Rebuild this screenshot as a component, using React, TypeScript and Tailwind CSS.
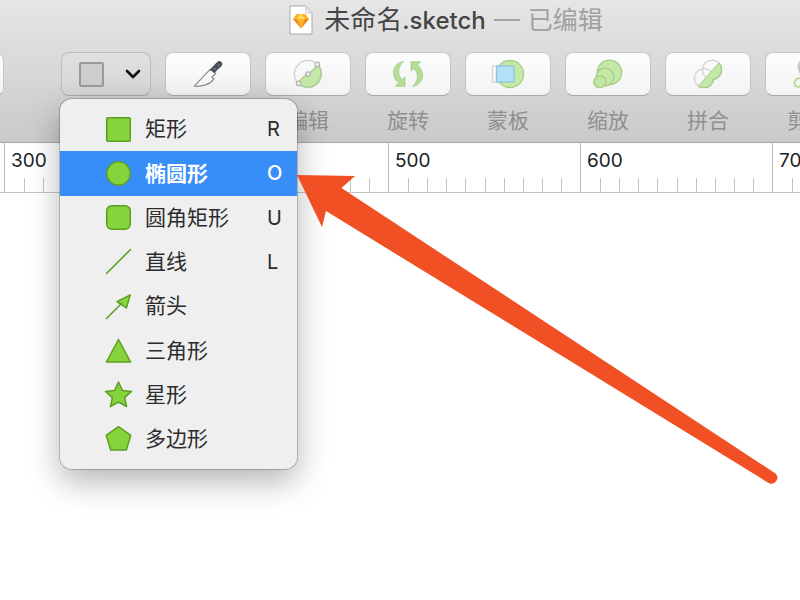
import type { ReactNode } from "react";

const FILL = "#86d43c";
const EDGE = "#5c9e22";
const PALE = "#c4e8a6";
const PALE_EDGE = "#a5cc8b";
const GREY = "#d2d2d5";

function Icon({ children }: { children: ReactNode }) {
  return (
    <svg viewBox="0 0 36 36" className="size-9" fill="none" aria-hidden="true">
      {children}
    </svg>
  );
}

const knife = (
  <Icon>
    <path d="M4.3 30.2 L20.3 13.2 L25.8 17.5 L21.8 21.2 L24 22.8 C20 28.5 12 31 4.3 30.2Z" fill="#f7f7f7" stroke="#8d8d8d" strokeWidth="1.2" strokeLinejoin="round" />
    <path d="M22.2 15.2 L29.5 7.8" stroke="#4b515a" strokeWidth="5.6" />
    <path d="M28 9.4 L29.4 8" stroke="#4b515a" strokeWidth="5.6" strokeLinecap="round" />
    <circle cx="28.5" cy="9" r="0.8" fill="#8f959c" />
    <circle cx="24.8" cy="12.8" r="0.8" fill="#8f959c" />
  </Icon>
);

const edit = (
  <Icon>
    <circle cx="18" cy="18" r="13.6" stroke={GREY} strokeWidth="1.4" />
    <path d="M27.6 8.4 A13.6 13.6 0 0 1 8.4 27.6 C11 22 14 20.5 18 18 C22 15.5 25 13 27.6 8.4Z" fill={PALE} stroke={PALE_EDGE} strokeWidth="1.2" />
    <circle cx="27.4" cy="8.4" r="2.2" fill="#f5f5f5" stroke="#b5b5b8" strokeWidth="1.3" />
    <circle cx="18" cy="18" r="2.2" fill="#f5f5f5" stroke="#b5b5b8" strokeWidth="1.3" />
    <circle cx="8.6" cy="27.4" r="2.2" fill="#f5f5f5" stroke="#b5b5b8" strokeWidth="1.3" />
  </Icon>
);

const crescent = "M13.5 5.5 C6 7 3 12 3.5 17.5 C3.8 21.5 6 25 8.6 27 L5.2 30.3 H15 V20.8 L12.2 23.6 C8 20 6.5 12 13.5 5.5Z";
const rotate = (
  <Icon>
    <path d={crescent} fill="#b4dc92" stroke={PALE_EDGE} strokeWidth="0.8" />
    <path d={crescent} transform="rotate(180 18 18)" fill="#b4dc92" stroke={PALE_EDGE} strokeWidth="0.8" />
  </Icon>
);

const mask = (
  <Icon>
    <rect x="2.5" y="10" width="21" height="16" stroke="#cfd4d8" strokeWidth="1.3" />
    <circle cx="20" cy="18" r="13.6" fill={PALE} stroke={PALE_EDGE} strokeWidth="1.2" />
    <rect x="6.5" y="10" width="17.5" height="16" fill="#b4e0f8" stroke="#94c3dc" strokeWidth="1.3" />
  </Icon>
);

const scale = (
  <Icon>
    <path d="M5.4 21.2 L9.4 9 A12.4 12.4 0 1 1 21 29 L12.5 31.3 A6 6 0 0 1 5.4 21.2Z" fill={PALE} />
    <circle cx="19.5" cy="16.4" r="12.2" fill={PALE} stroke={PALE_EDGE} strokeWidth="1.2" />
    <circle cx="15" cy="21" r="8.8" fill={PALE} stroke={PALE_EDGE} strokeWidth="1.2" />
    <circle cx="10" cy="25.6" r="5.8" fill={PALE} stroke={PALE_EDGE} strokeWidth="1.2" />
  </Icon>
);

const union = (
  <Icon>
    <clipPath id="lower-half">
      <path d="M31 4.6 L7 32 H36 V4Z" />
    </clipPath>
    <circle cx="22" cy="13.8" r="9.6" stroke={GREY} strokeWidth="1.3" />
    <circle cx="14" cy="22.2" r="9.6" stroke={GREY} strokeWidth="1.3" />
    <g clipPath="url(#lower-half)">
      <circle cx="22" cy="13.8" r="9.6" fill={PALE} stroke={PALE_EDGE} strokeWidth="1.6" />
      <circle cx="14" cy="22.2" r="9.6" fill={PALE} stroke={PALE_EDGE} strokeWidth="1.6" />
      <circle cx="22" cy="13.8" r="8.8" fill={PALE} />
      <circle cx="14" cy="22.2" r="8.8" fill={PALE} />
    </g>
    <path d="M29.2 6.7 L9.2 29.5" stroke={PALE_EDGE} strokeWidth="1" />
  </Icon>
);

const scissors = (
  <Icon>
    <path d="M12 5 C8 9 8 13 13 19 L23 30" stroke="#c9c9cc" strokeWidth="3.5" />
    <ellipse cx="9" cy="26.5" rx="4.8" ry="4" transform="rotate(-35 9 26.5)" stroke="#b4dc92" strokeWidth="2" />
    <path d="M13 22 L26 8" stroke="#c9c9cc" strokeWidth="2.5" />
  </Icon>
);

const tools = [
  { name: "编辑", icon: edit },
  { name: "旋转", icon: rotate },
  { name: "蒙板", icon: mask },
  { name: "缩放", icon: scale },
  { name: "拼合", icon: union },
  { name: "剪刀", icon: scissors },
];

const shapes: { name: string; shortcut?: string; active?: boolean; drawing: ReactNode }[] = [
  { name: "矩形", shortcut: "R", drawing: <rect x="2.7" y="2.7" width="23.6" height="23.6" rx="1" /> },
  { name: "椭圆形", shortcut: "O", active: true, drawing: <circle cx="14.5" cy="14.5" r="11.7" /> },
  { name: "圆角矩形", shortcut: "U", drawing: <rect x="2.7" y="2.7" width="23.6" height="23.6" rx="5" /> },
  { name: "直线", shortcut: "L", drawing: <path d="M2.5 26.5 L26.5 2.5" /> },
  { name: "箭头", drawing: <path d="M2.5 26.5 L17.5 11.5 M13 9.6 L26.3 2.8 L22.4 16 Z" /> },
  { name: "三角形", drawing: <path d="M14.5 3.5 L26.6 26 H2.4Z" /> },
  { name: "星形", drawing: <path d="M14.5 2 L18.3 10.4 L27.5 11.4 L20.6 17.6 L22.6 26.6 L14.5 22 L6.4 26.6 L8.4 17.6 L1.5 11.4 L10.7 10.4Z" /> },
  { name: "多边形", drawing: <path d="M14.5 2.7 L26.8 11.4 L22.3 26 H6.7 L2.2 11.4Z" /> },
];

const keycap =
  "flex h-11 w-[86px] shrink-0 items-center justify-center rounded-lg border border-[#c6c6c6] border-b-[#a9a9a9] bg-linear-to-b from-[#fdfdfd] to-[#f3f3f3]";

function ShapeMenu() {
  return (
    <ul
      role="menu"
      aria-label="形状"
      className="absolute top-[47px] -left-px z-10 grid h-[370px] w-[237px] auto-rows-fr rounded-xl bg-[#efefef] py-2 shadow-[0_0_0_1px_rgba(0,0,0,0.2),0_12px_32px_rgba(0,0,0,0.3)]"
    >
      {shapes.map((s) => (
        <li key={s.name} role="none" className="grid">
          <button
            role="menuitem"
            className={`flex items-center pr-3 pl-11 text-[21px] ${s.active ? "bg-[#388ef8] font-bold text-white" : "text-[#2c2c2c]"}`}
          >
            <svg viewBox="0 0 29 29" className="mr-3 size-[29px] shrink-0" fill={FILL} stroke={EDGE} strokeWidth="1.5" strokeLinejoin="round" strokeLinecap="round" aria-hidden="true">
              {s.drawing}
            </svg>
            <span className="flex-1 text-left">{s.name}</span>
            <kbd className={`w-[18px] text-left font-[family-name:Inter,sans-serif] text-xl ${s.active ? "font-medium" : "font-normal"}`}>
              {s.shortcut}
            </kbd>
          </button>
        </li>
      ))}
    </ul>
  );
}

function TitleBar() {
  return (
    <div className="flex h-10 items-center justify-center pl-[92px] text-[26px] whitespace-nowrap">
      <svg viewBox="0 0 24 30" className="mr-[11px] h-[30px] w-6 shrink-0" aria-hidden="true">
        <path d="M1 1 H16.5 L23 8 V29 H1Z" fill="#fff" stroke="#a8a8a8" />
        <path d="M16.5 1 V8 H23Z" fill="#e9e9e9" stroke="#c8c8c8" strokeWidth="0.8" />
        <path d="M7.5 9 L16.500 9 L20 14 L12 23.500 L4 14Z" fill="#fdb52a" />
        <path d="M12 8.800 L16 14 H8Z" fill="#fedc6a" />
        <path d="M4 14 H8 L12 23.500Z M20 14 H16 L12 23.500Z" fill="#f08a1c" />
      </svg>
      <h1 className="leading-8 text-[#454545]">
        未命名<span className="font-[family-name:Inter,sans-serif] text-2xl leading-8 font-medium">.sketch</span>
      </h1>
      <span className="mx-2 h-[2px] w-[26px] bg-[#a3a3a3]" />
      <span className="text-[25px] leading-8 text-[#a0a0a0]">已编辑</span>
    </div>
  );
}

function Ruler() {
  return (
    <div className="flex h-[50px] border-b border-[#c4c4c4] bg-white pl-1 font-[family-name:Inter,sans-serif] text-[19px] text-[#222]">
      {[300, 400, 500, 600, 700].map((mark) => (
        <div key={mark} className="flex w-48 shrink-0 flex-col justify-between border-l border-[#b9b9b9] pt-[6px]">
          <span className="pl-[6px] leading-6">{mark}</span>
          <div className="grid h-[14px] grid-cols-10">
            {Array.from({ length: 10 }, (_, i) => (
              <i key={i} className="border-l border-[#c4c4c4] first:border-transparent" />
            ))}
          </div>
        </div>
      ))}
    </div>
  );
}

export default function App() {
  return (
    <div className="relative min-h-screen overflow-hidden bg-white font-[family-name:'Liberation_Sans','Noto_Sans_CJK_SC',sans-serif]">
      <header className="border-b border-[#a9a9a9] bg-linear-to-b from-[#e6e6e6] to-[#cacaca] pb-[9px]">
        <TitleBar />
        <div className="flex items-start pt-3">
          <button aria-label="插入" className={`${keycap} -ml-[82px]`} />
          <div className="relative ml-[57px]">
            <button
              aria-label="形状"
              aria-haspopup="menu"
              aria-expanded="true"
              className="flex h-11 w-[90px] items-center justify-between rounded-lg border border-[#bcbcbc] border-b-[#a8a8a8] bg-linear-to-b from-[#e0e0e0] to-[#d6d6d6] pr-2 pl-[17px]"
            >
              <span className="size-[25px] rounded-xs border-2 border-[#9a9a9a] bg-[#cecece]" />
              <svg viewBox="0 0 18 12" className="h-3 w-[18px]" fill="none" stroke="#111" strokeWidth="2.6" strokeLinecap="round" strokeLinejoin="round" aria-hidden="true">
                <path d="M3 3 L9 9 L15 3" />
              </svg>
            </button>
            <ShapeMenu />
          </div>
          <div className="ml-[14px] flex gap-[14px]">
            <button aria-label="切片" className={keycap}>
              {knife}
            </button>
            {tools.map((t) => (
              <div key={t.name} className="flex flex-col items-center gap-3">
                <button aria-labelledby={`tool-${t.name}`} className={keycap}>
                  {t.icon}
                </button>
                <span id={`tool-${t.name}`} className="text-[21px] leading-[25px] text-[#8f8f8f]">
                  {t.name}
                </span>
              </div>
            ))}
          </div>
        </div>
      </header>
      <Ruler />
      <svg viewBox="0 0 482 312" className="pointer-events-none absolute top-[175px] left-[297px] z-20 h-[312px] w-[482px]" aria-hidden="true">
        <path d="M0 0 L58 1 L44.500 13 L478.500 298.500 A6 6 0 0 1 472.500 308.500 L29 36 L25 52Z" fill="#f05023" />
      </svg>
    </div>
  );
}
